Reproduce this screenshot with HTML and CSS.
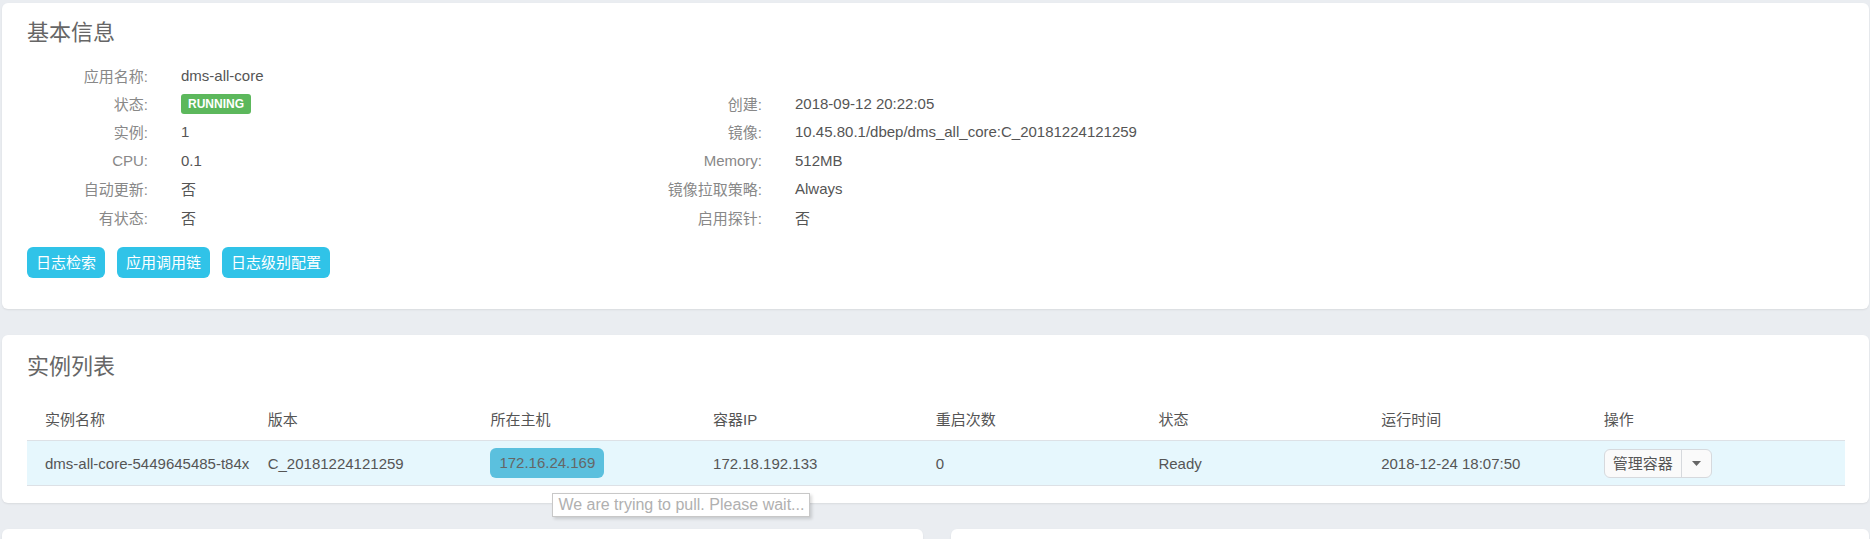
FILE: index.html
```html
<!DOCTYPE html>
<html lang="zh">
<head>
<meta charset="utf-8">
<title>基本信息</title>
<link rel="stylesheet" href="styles.css">
</head>
<body>
<div class="page">
  <section class="card card-info">
    <h2 class="card-title">基本信息</h2>
    <div class="info-grid">
      <div class="lbl">应用名称:</div><div class="val">dms-all-core</div><div class="lbl"></div><div class="val"></div>
      <div class="lbl">状态:</div><div class="val"><span class="badge-run">RUNNING</span></div><div class="lbl">创建:</div><div class="val">2018-09-12 20:22:05</div>
      <div class="lbl">实例:</div><div class="val">1</div><div class="lbl">镜像:</div><div class="val">10.45.80.1/dbep/dms_all_core:C_20181224121259</div>
      <div class="lbl">CPU:</div><div class="val">0.1</div><div class="lbl">Memory:</div><div class="val">512MB</div>
      <div class="lbl">自动更新:</div><div class="val">否</div><div class="lbl">镜像拉取策略:</div><div class="val">Always</div>
      <div class="lbl">有状态:</div><div class="val">否</div><div class="lbl">启用探针:</div><div class="val">否</div>
    </div>
    <div class="btn-row">
      <button class="btn-info">日志检索</button>
      <button class="btn-info">应用调用链</button>
      <button class="btn-info">日志级别配置</button>
    </div>
  </section>

  <section class="card card-list">
    <h2 class="card-title">实例列表</h2>
    <table class="inst-table">
      <colgroup>
        <col class="c"><col class="c"><col class="c"><col class="c"><col class="c"><col class="c"><col class="c"><col>
      </colgroup>
      <thead>
        <tr><th>实例名称</th><th>版本</th><th>所在主机</th><th>容器IP</th><th>重启次数</th><th>状态</th><th>运行时间</th><th>操作</th></tr>
      </thead>
      <tbody>
        <tr>
          <td>dms-all-core-5449645485-t84x</td>
          <td>C_20181224121259</td>
          <td class="host-cell"><span class="host-badge">172.16.24.169</span><span class="tooltip">We are trying to pull. Please wait...</span></td>
          <td>172.18.192.133</td>
          <td>0</td>
          <td>Ready</td>
          <td>2018-12-24 18:07:50</td>
          <td><span class="btn-group"><span class="bg-main">管理容器</span><span class="bg-caret"><svg width="9" height="5" viewBox="0 0 9 5"><path d="M0 0h9L4.5 5z" fill="#666"/></svg></span></span></td>
        </tr>
      </tbody>
    </table>
  </section>

  <div class="bottom-row">
    <section class="card card-half-left"></section>
    <section class="card card-half-right"></section>
  </div>
</div>
</body>
</html>
```

FILE: styles.css
```css
html, body {
  margin: 0;
  padding: 0;
  background: #eaedf1;
  font-family: "Liberation Sans", "Noto Sans CJK SC", sans-serif;
  font-size: 15px;
  color: #555;
  overflow: hidden;
}

.page {
  padding: 3px 1px 0 2px;
}

.card {
  background: #fff;
  border-radius: 6px;
  box-shadow: 0 1px 2px rgba(0, 0, 0, 0.08);
}

.card-title {
  margin: 0;
  font-size: 22px;
  font-weight: normal;
  line-height: 30px;
  color: #666;
}

.card-info {
  padding: 15px 25px 30px 25px;
  height: 306px;
  box-sizing: border-box;
}

.info-grid {
  margin-top: 13px;
  display: grid;
  grid-template-columns: 121px 427px 121px 1fr;
  column-gap: 33px;
  grid-auto-rows: 28.4px;
  align-items: center;
}

.lbl {
  text-align: right;
  color: #888;
  white-space: nowrap;
}

.val {
  color: #555;
  white-space: nowrap;
}

.badge-run {
  display: inline-block;
  background: #5cb85c;
  color: #fff;
  font-weight: bold;
  font-size: 12px;
  line-height: 20px;
  height: 20px;
  padding: 0 7px;
  border-radius: 3px;
  vertical-align: middle;
}

.btn-row {
  margin-top: 16px;
  display: flex;
  gap: 12px;
}

.btn-info {
  font-family: inherit;
  font-size: 15px;
  color: #fff;
  background: #30c3e8;
  border: none;
  border-radius: 6px;
  height: 31px;
  padding: 0 9px;
  line-height: 31px;
  cursor: pointer;
}

.card-list {
  margin-top: 26px;
  padding: 17px 24px 17px 25px;
}

.inst-table {
  margin-top: 15px;
  width: 100%;
  border-collapse: collapse;
  table-layout: fixed;
}

.inst-table col.c {
  width: 222.7px;
}

.inst-table th {
  text-align: left;
  font-weight: normal;
  color: #555;
  height: 43px;
  padding: 0 0 0 18px;
  border-bottom: 1px solid #dde1e6;
  vertical-align: middle;
}

.inst-table td {
  background: #e6f7fd;
  height: 44px;
  padding: 0 0 0 18px;
  border-bottom: 1px solid #dde1e6;
  white-space: nowrap;
  color: #555;
}

.host-cell {
  position: relative;
}

.host-badge {
  display: inline-block;
  background: #5bc0de;
  color: #666;
  border-radius: 6px;
  height: 30px;
  line-height: 30px;
  padding: 0 9px;
}

.tooltip {
  position: absolute;
  left: 80px;
  top: 52px;
  background: #fff;
  border: 1px solid #c8c8c8;
  box-shadow: 2px 2px 3px rgba(0, 0, 0, 0.15);
  color: #b0b0b0;
  font-size: 16px;
  line-height: 22px;
  padding: 0 5px;
  white-space: nowrap;
  z-index: 5;
}

.btn-group {
  display: inline-flex;
  height: 29px;
  border: 1px solid #d6d9dd;
  border-radius: 6px;
  background: #fafafa;
  box-sizing: border-box;
  vertical-align: middle;
}

.bg-main {
  padding: 0 8px;
  line-height: 27px;
  color: #555;
  border-right: 1px solid #d6d9dd;
}

.bg-caret {
  width: 29px;
  display: flex;
  align-items: center;
  justify-content: center;
}

.bottom-row {
  margin-top: 26px;
  display: flex;
  gap: 28px;
}

.card-half-left {
  width: 921px;
  height: 60px;
}

.card-half-right {
  flex: 1;
  height: 60px;
}
```
